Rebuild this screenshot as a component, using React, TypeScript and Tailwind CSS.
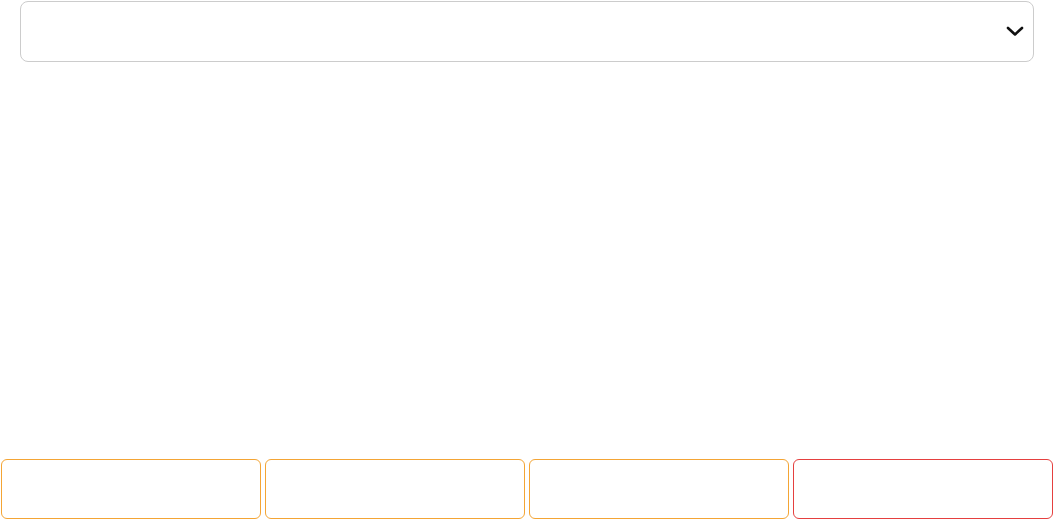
import React from "react";

export default function App() {
  return (
    <div className="flex h-[520px] w-[1054px] flex-col justify-between bg-white pt-px pb-px" style={{ fontFamily: '"Liberation Sans", sans-serif' }}>
      <div className="mx-5 flex h-[61px] items-center justify-end rounded-lg border border-[#cccccc] bg-white pr-[9px]">
        <svg width="18" height="11" viewBox="0 0 18 11" fill="none">
          <path d="M2 2 L9 8.5 L16 2" stroke="#111" strokeWidth="2.6" strokeLinecap="round" strokeLinejoin="round" />
        </svg>
      </div>
      <div className="grid grid-cols-4 gap-1 px-px">
        <div className="h-[60px] rounded-md border border-[#f4a535]" />
        <div className="h-[60px] rounded-md border border-[#f4a535]" />
        <div className="h-[60px] rounded-md border border-[#f4a535]" />
        <div className="h-[60px] rounded-md border border-[#e5403f]" />
      </div>
    </div>
  );
}
